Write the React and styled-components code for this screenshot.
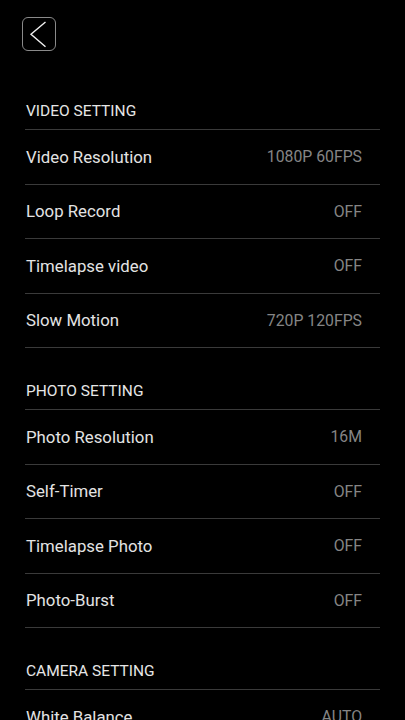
import React from 'react';
import styled, { createGlobalStyle } from 'styled-components';

const GlobalStyle = createGlobalStyle`
    html, body {
        margin: 0;
        padding: 0;
        background: #000;
    }
    body {
        font-family: Roboto, "Noto Sans", sans-serif;
        -webkit-font-smoothing: antialiased;
    }
`

const Page = styled.div
`   width: 405px;
    height: 720px;
    overflow: hidden;
    background: #000;
    color: #e8e8e8;
`

const TopBar = styled.div
`   height: 68px;
    box-sizing: border-box;
    padding: 17px 0 0 22px;
`

const BackButton = styled.button
`   width: 34px;
    height: 34px;
    box-sizing: border-box;
    padding: 0;
    border: 1.5px solid #8a8a8a;
    border-radius: 6px;
    background: transparent;
    display: flex;
    align-items: center;
    justify-content: center;
    cursor: pointer;
`

const List = styled.div
`   padding: 0 25px;
`

const SectionTitle = styled.div
`   height: 62px;
    box-sizing: border-box;
    display: flex;
    align-items: flex-end;
    padding-bottom: 8px;
    border-bottom: 1px solid #3a3a3a;
    font-size: 15.5px;
    line-height: 20px;
    color: #e6e6e6;
    padding-left: 1px;
`

const Row = styled.div
`   height: 54.5px;
    box-sizing: border-box;
    display: flex;
    align-items: center;
    justify-content: space-between;
    border-bottom: 1px solid #3a3a3a;
    padding: 0 18px 0 1px;
`

const Label = styled.span
`   font-size: 16.8px;
    color: #e3e3e3;
`

const Value = styled.span
`   font-size: 15.8px;
    color: #858585;
`

const sections = [
    {
        title: 'VIDEO SETTING',
        rows: [
            ['Video Resolution', '1080P 60FPS'],
            ['Loop Record', 'OFF'],
            ['Timelapse video', 'OFF'],
            ['Slow Motion', '720P 120FPS'],
        ],
    },
    {
        title: 'PHOTO SETTING',
        rows: [
            ['Photo Resolution', '16M'],
            ['Self-Timer', 'OFF'],
            ['Timelapse Photo', 'OFF'],
            ['Photo-Burst', 'OFF'],
        ],
    },
    {
        title: 'CAMERA SETTING',
        rows: [
            ['White Balance', 'AUTO'],
        ],
    },
];

const App = () => {
    return(
        <Page>
            <GlobalStyle />
            <TopBar>
                <BackButton aria-label="Back">
                    <svg width="20" height="28" viewBox="0 0 20 28">
                        <polyline points="16.5,2 2,14.3 16.5,26.7" fill="none" stroke="#f0f0f0" strokeWidth="1.4" />
                    </svg>
                </BackButton>
            </TopBar>
            <List>
                {sections.map((section) => (
                    <div key={section.title}>
                        <SectionTitle>{section.title}</SectionTitle>
                        {section.rows.map(([label, value]) => (
                            <Row key={label}>
                                <Label>{label}</Label>
                                <Value>{value}</Value>
                            </Row>
                        ))}
                    </div>
                ))}
            </List>
        </Page>
    );
};

export default App;
